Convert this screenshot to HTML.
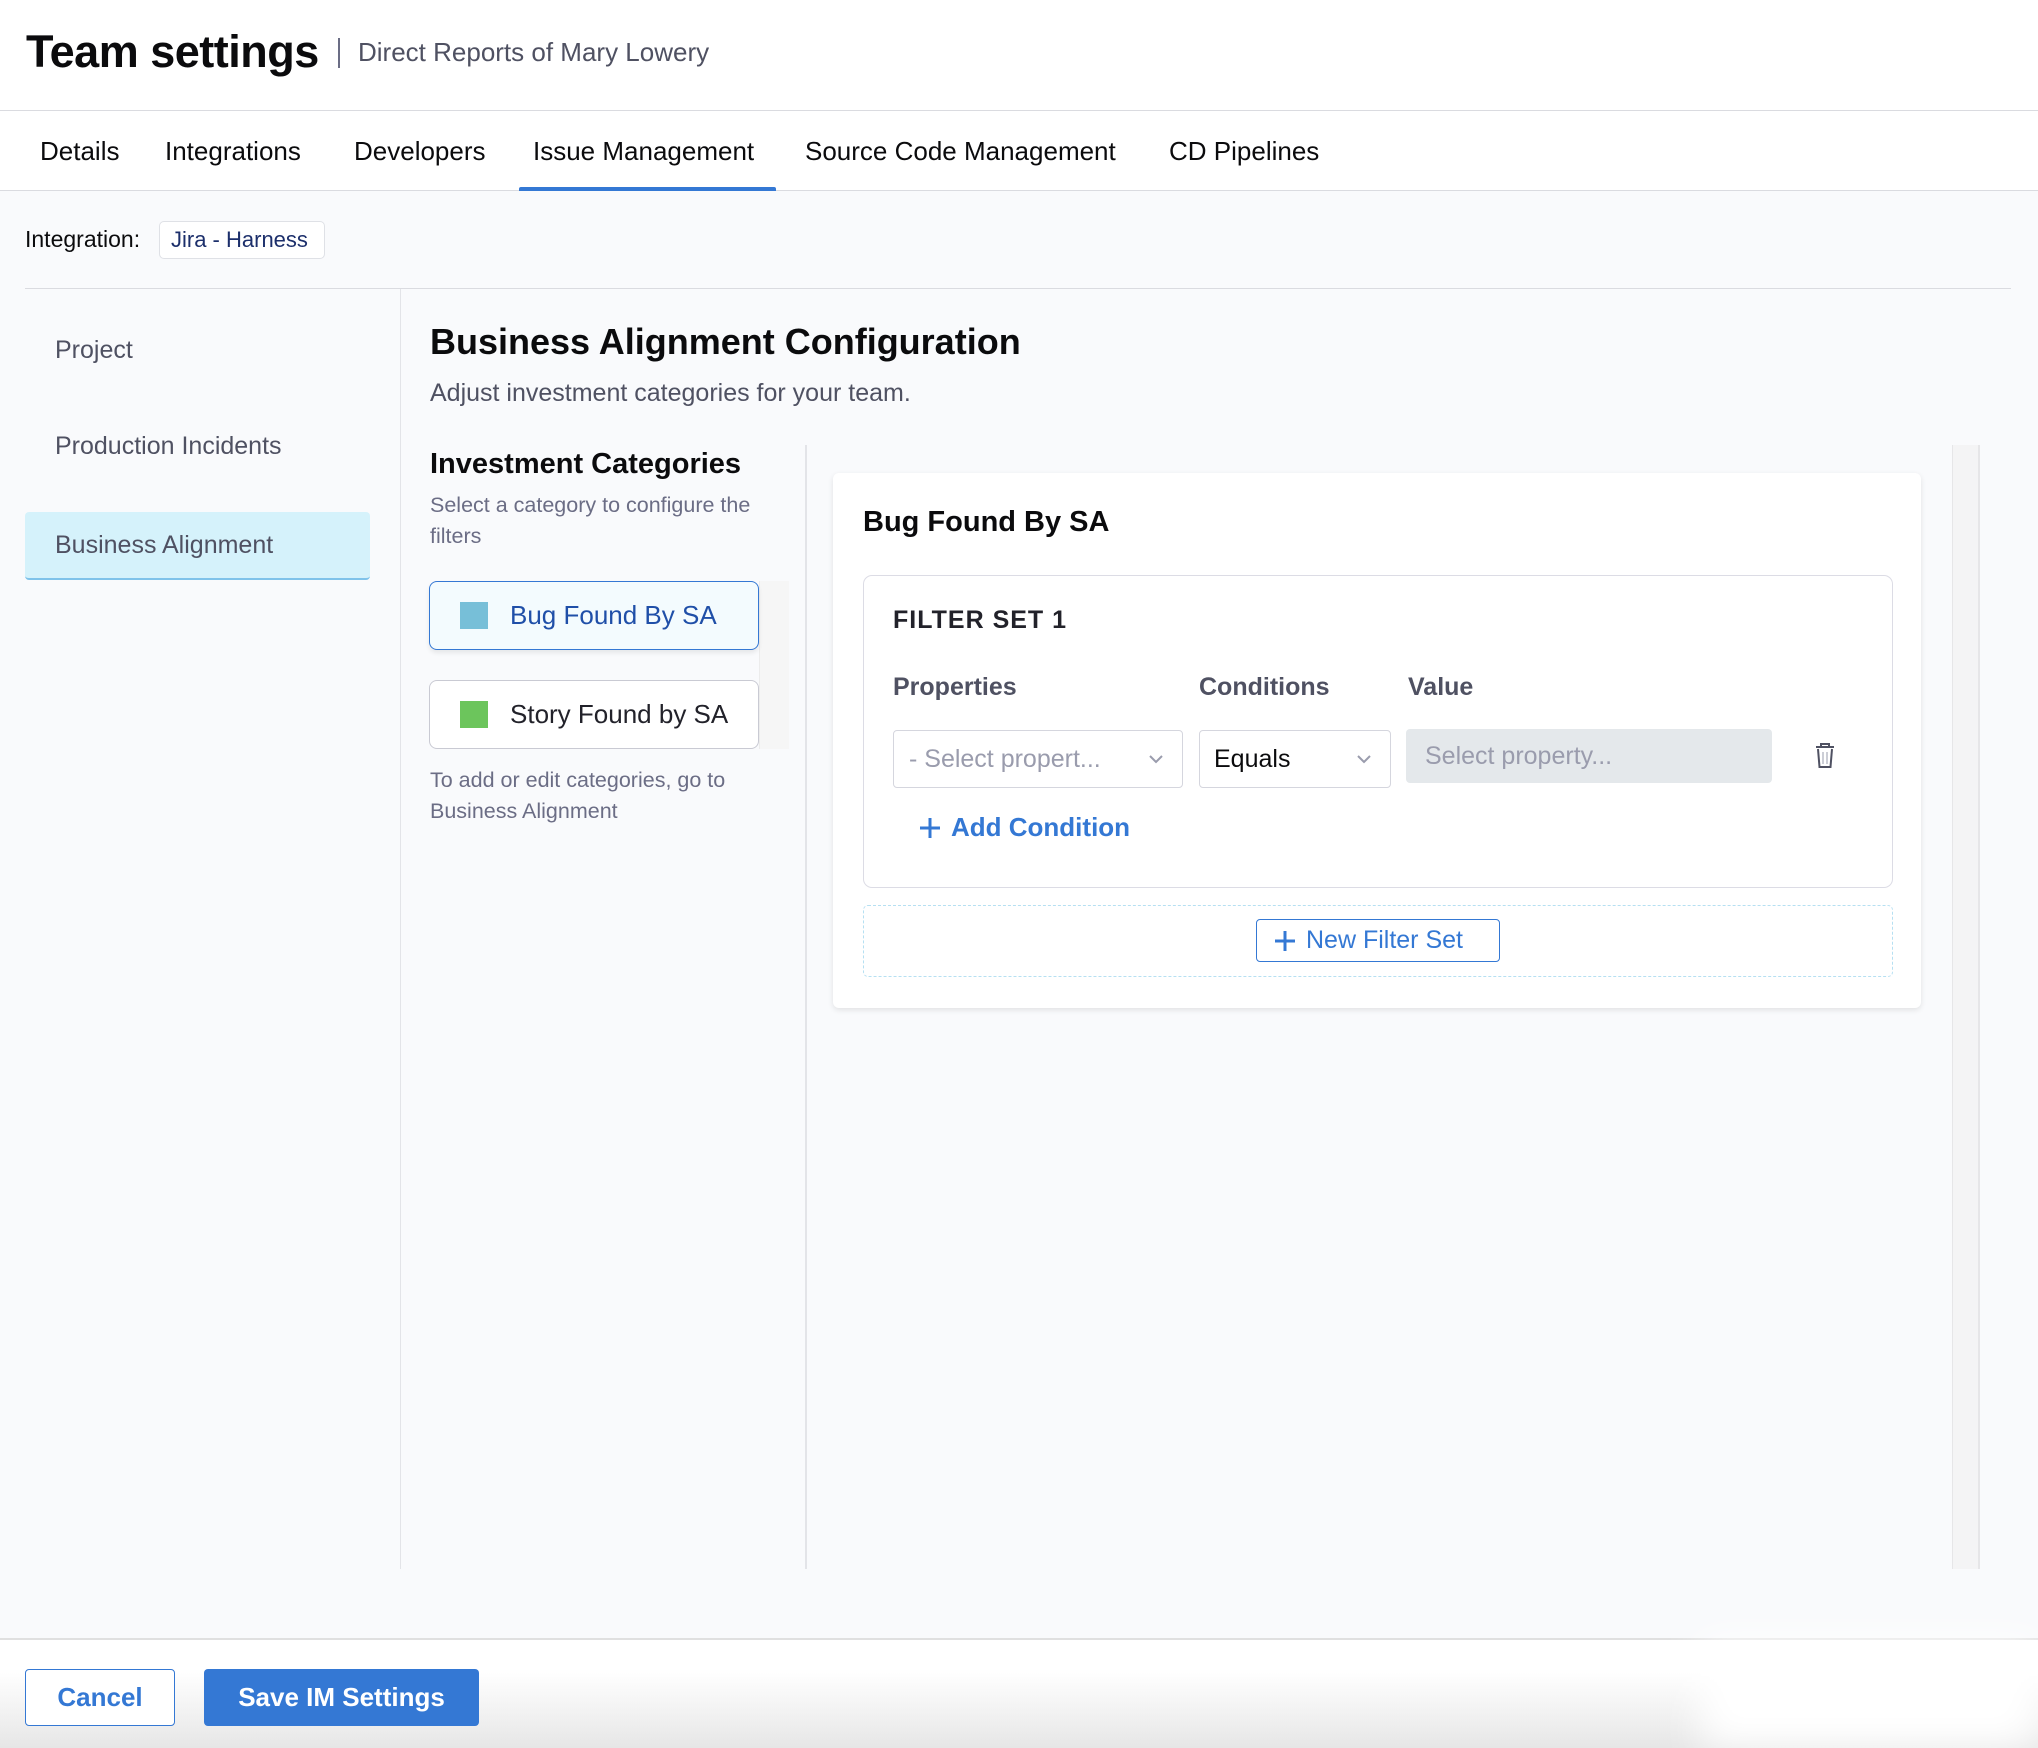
<!DOCTYPE html>
<html><head><meta charset="utf-8"><style>
*{box-sizing:border-box;margin:0;padding:0}
body{width:2038px;height:1748px;position:relative;overflow:hidden;background:#f9fafc;font-family:"Liberation Sans",sans-serif;color:#0b0b0d}
.a{position:absolute;white-space:nowrap}
.vc{display:flex;align-items:center}
</style></head><body>
<div class="a" style="left:0;top:0;width:2038px;height:191px;background:#fff;border-bottom:1px solid #dadbe0"></div>
<div class="a" style="left:0;top:110px;width:2038px;height:1px;background:#dadbe0"></div>
<div class="a" style="left:26px;top:26px;font-size:45px;font-weight:700;letter-spacing:-0.5px">Team settings</div>
<div class="a" style="left:338px;top:38px;width:2px;height:30px;background:#6b6d85"></div>
<div class="a" style="left:358px;top:37px;font-size:26px;color:#4f5162">Direct Reports of Mary Lowery</div>
<div class="a" style="top:136px;font-size:26px;font-weight:500;left:40px">Details</div>
<div class="a" style="top:136px;font-size:26px;left:165px">Integrations</div>
<div class="a" style="top:136px;font-size:26px;left:354px">Developers</div>
<div class="a" style="top:136px;font-size:26px;left:533px">Issue Management</div>
<div class="a" style="top:136px;font-size:26px;left:805px">Source Code Management</div>
<div class="a" style="top:136px;font-size:26px;left:1169px">CD Pipelines</div>
<div class="a" style="left:519px;top:187px;width:257px;height:4px;background:#3478d4;border-radius:2px 2px 0 0"></div>

<div class="a" style="left:25px;top:226px;font-size:23px">Integration:</div>
<div class="a vc" style="left:159px;top:221px;width:166px;height:38px;border:1px solid #dfe1e6;border-radius:5px;background:#fff;font-size:22px;color:#1c2f6b;padding-left:11px">Jira - Harness</div>
<div class="a" style="left:25px;top:288px;width:1986px;height:1px;background:#dadbe0"></div>
<div class="a" style="left:400px;top:289px;width:1px;height:1280px;background:#e3e4e8"></div>

<div class="a" style="left:55px;top:336px;font-size:25px;color:#4f5162">Project</div>
<div class="a" style="left:55px;top:432px;font-size:25px;color:#4f5162">Production Incidents</div>
<div class="a vc" style="left:25px;top:512px;width:345px;height:68px;background:#d5f2fb;border-bottom:2px solid #7fc3ea;border-radius:4px;padding-left:30px;font-size:25px;color:#4f5162">Business Alignment</div>

<div class="a" style="left:430px;top:321px;font-size:36px;font-weight:700">Business Alignment Configuration</div>
<div class="a" style="left:430px;top:379px;font-size:25px;color:#4f5162">Adjust investment categories for your team.</div>

<div class="a" style="left:805px;top:445px;width:2px;height:1124px;background:#e3e4e8"></div>
<div class="a" style="left:430px;top:448px;font-size:29px;font-weight:700">Investment Categories</div>
<div class="a" style="left:430px;top:490px;font-size:21.5px;color:#6b6d85;line-height:31px;white-space:normal;width:360px">Select a category to configure the filters</div>
<div class="a" style="left:759px;top:581px;width:30px;height:168px;background:#f6f6f6;border-left:1px solid #ececec"></div>
<div class="a vc" style="left:429px;top:581px;width:330px;height:69px;border:1px solid #3478d4;border-radius:8px;background:#f3fbfe;box-shadow:0 3px 5px rgba(0,0,0,.08);font-size:26px;color:#1f4fa8"><span style="width:28px;height:27px;background:#77bfd8;margin:0 22px 0 30px"></span>Bug Found By SA</div>
<div class="a vc" style="left:429px;top:680px;width:330px;height:69px;border:1px solid #c9cad3;border-radius:8px;background:#fff;font-size:26px;color:#22222a"><span style="width:28px;height:27px;background:#6cc55c;margin:0 22px 0 30px"></span>Story Found by SA</div>
<div class="a" style="left:430px;top:765px;font-size:21.5px;color:#6b6d85;line-height:31px">To add or edit categories, go to<br>Business Alignment</div>

<div class="a" style="left:1952px;top:445px;width:28px;height:1124px;background:#f4f4f5;border-left:1px solid #e6e6e8;border-right:2px solid #e6e6e8"></div>

<div class="a" style="left:833px;top:473px;width:1088px;height:535px;background:#fff;border-radius:6px;box-shadow:0 2px 6px rgba(0,0,0,.1)"></div>
<div class="a" style="left:863px;top:506px;font-size:29px;font-weight:700">Bug Found By SA</div>
<div class="a" style="left:863px;top:575px;width:1030px;height:313px;border:1px solid #dcdce5;border-radius:9px"></div>
<div class="a" style="left:893px;top:606px;font-size:25px;font-weight:700;color:#22222a;letter-spacing:1px">FILTER SET 1</div>
<div class="a" style="left:893px;top:673px;font-size:25px;font-weight:700;color:#4f5162">Properties</div>
<div class="a" style="left:1199px;top:673px;font-size:25px;font-weight:700;color:#4f5162">Conditions</div>
<div class="a" style="left:1408px;top:673px;font-size:25px;font-weight:700;color:#4f5162">Value</div>
<div class="a vc" style="left:893px;top:730px;width:290px;height:58px;border:1px solid #d5d6de;border-radius:4px;background:#fff;font-size:25px;color:#9a9cad;padding-left:15px">- Select propert...<svg style="position:absolute;right:18px" width="16" height="10" viewBox="0 0 16 10"><path d="M2 2l6 6 6-6" fill="none" stroke="#9a9cad" stroke-width="2"/></svg></div>
<div class="a vc" style="left:1199px;top:730px;width:192px;height:58px;border:1px solid #d5d6de;border-radius:4px;background:#fff;font-size:25px;color:#0b0b0d;padding-left:14px">Equals<svg style="position:absolute;right:18px" width="16" height="10" viewBox="0 0 16 10"><path d="M2 2l6 6 6-6" fill="none" stroke="#9a9cad" stroke-width="2"/></svg></div>
<div class="a vc" style="left:1406px;top:729px;width:366px;height:54px;background:#e4e8eb;border-radius:4px;font-size:25px;color:#9a9cad;padding-left:19px">Select property...</div>
<svg class="a" style="left:1813px;top:740px" width="24" height="30" viewBox="0 0 24 30"><path d="M3 7h18M8 7V4h8v3M5 9l1.5 18h11L19 9" fill="none" stroke="#4f5162" stroke-width="2"/><path d="M10 12v12M14 12v12" stroke="#9a9cad" stroke-width="1"/></svg>
<div class="a vc" style="left:919px;top:812px;font-size:26px;font-weight:700;color:#3478d4"><svg width="22" height="22" viewBox="0 0 22 22" style="margin-right:10px"><path d="M11 1v20M1 11h20" stroke="#3478d4" stroke-width="3"/></svg>Add Condition</div>
<div class="a" style="left:863px;top:905px;width:1030px;height:72px;border:1px dashed #b6e0f2;border-radius:5px"></div>
<div class="a vc" style="left:1256px;top:919px;width:244px;height:43px;border:1.5px solid #3478d4;border-radius:4px;background:#fff;font-size:25px;color:#3478d4;padding-left:17px"><svg width="22" height="22" viewBox="0 0 22 22" style="margin-right:10px"><path d="M11 1v20M1 11h20" stroke="#3478d4" stroke-width="3"/></svg>New Filter Set</div>

<div class="a" style="left:0;top:1638px;width:2038px;height:110px;background:linear-gradient(#fff 30%,#e6e6e6);border-top:2px solid #e0e0e0"></div>
<div class="a" style="left:1700px;top:1640px;width:338px;height:108px;background:#fff;filter:blur(20px)"></div>
<div class="a vc" style="left:25px;top:1669px;width:150px;height:57px;border:1.5px solid #3478d4;border-radius:4px;background:#fff;justify-content:center;font-size:26px;font-weight:700;color:#3478d4">Cancel</div>
<div class="a vc" style="left:204px;top:1669px;width:275px;height:57px;border-radius:4px;background:#3478d4;justify-content:center;font-size:26px;font-weight:700;color:#fff">Save IM Settings</div>
</body></html>
